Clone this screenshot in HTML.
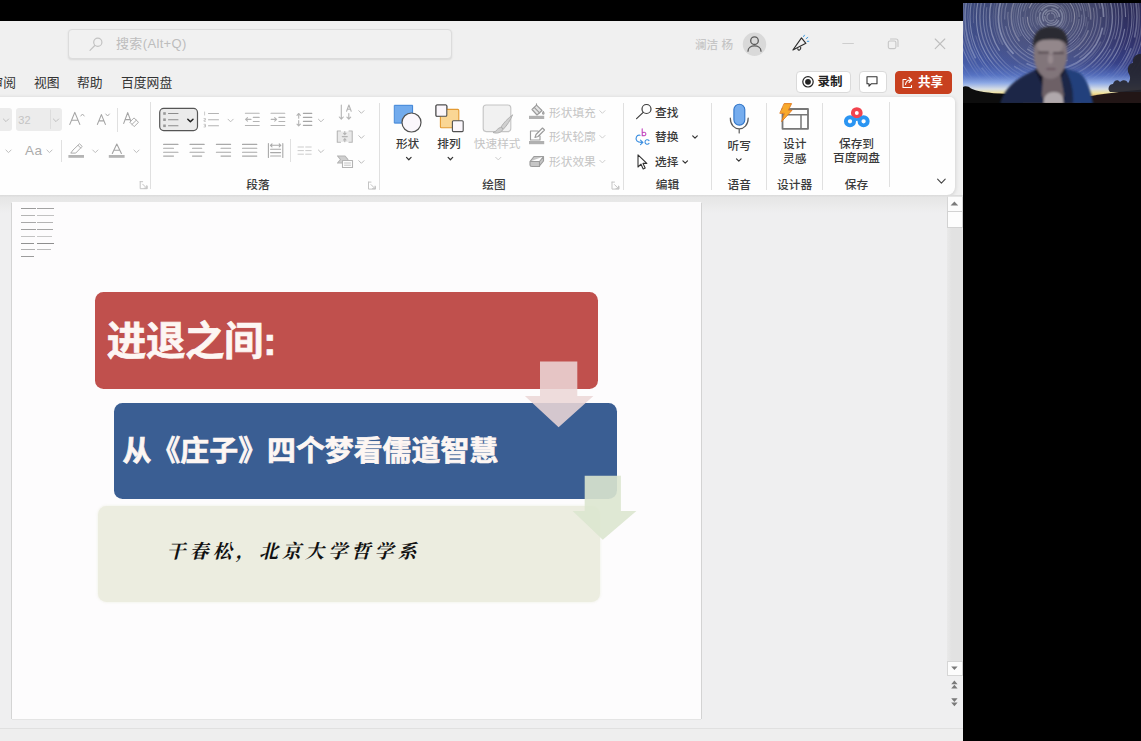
<!DOCTYPE html>
<html lang="zh-CN">
<head>
<meta charset="utf-8">
<title>PowerPoint</title>
<style>
*{box-sizing:border-box;margin:0;padding:0}
html,body{width:1141px;height:741px;overflow:hidden;background:#000}
body{position:relative;font-family:"Liberation Sans","Noto Sans CJK SC",sans-serif;font-size:12px;color:#333}
#win{position:absolute;left:0;top:21px;width:963px;height:720px;background:#f0f0f0;overflow:hidden}
#pg{position:absolute;left:0;top:-21px;width:963px;height:741px}
#pg>*{position:absolute}
#search{left:68px;top:29px;width:384px;height:30px;border:1px solid #dcdcdc;border-radius:4px;background:#f1f1f1;box-shadow:0 1px 2px rgba(0,0,0,.10)}
#search span{position:absolute;left:47px;top:6px;font-size:13px;letter-spacing:.35px;color:#bdbdbd;line-height:16px;white-space:nowrap}
.menu{font-size:12.8px;line-height:18px;color:#333;white-space:nowrap}
.tbtn{height:22px;border-radius:4px;font-size:13px;font-weight:bold;line-height:20px;white-space:nowrap;background:#fff;border:1px solid #dadada;color:#222}
#ribbon{left:-10px;top:96.7px;width:964.8px;height:98px;background:#fefefe;border-radius:0 5px 8px 0;box-shadow:0 1px 4px rgba(0,0,0,.17)}
.sep{width:1px;background:#e0e0e0}
.t{white-space:nowrap;font-size:11.7px;line-height:14px;color:#3a3a3a}
.t:not(.d){font-weight:500}
.d{color:#c4c4c4}
.c{transform:translateX(-50%);text-align:center}
svg{position:absolute;overflow:visible}
.fbox{background:#ececec;border-radius:3px}
#work{left:0;top:195px;width:963px;height:534px;background:linear-gradient(#dadada,#e6e6e6 2.5px,#e9e9e9 8px,#efeff0 18px)}
#status{left:0;top:728px;width:963px;height:13px;background:#eeeeee;border-top:1px solid #e0e0e0}
#slide{left:12px;top:203px;width:689px;height:516px;background:#fdfcfd;box-shadow:-1px 0 0 #d4d4d4,1px 0 0 #d3d3d3,0 1px 0 #e4e4e4}
#slide>*{position:absolute}
.box{border-radius:8.5px}
.sl{font-weight:bold;color:#fdf6f3;white-space:nowrap;-webkit-text-stroke:.7px #fdf6f3}
.au{white-space:nowrap;font-family:"Liberation Serif","Noto Serif CJK SC",serif;font-weight:700;font-size:19px;line-height:26px;letter-spacing:4.1px;color:#111;font-style:italic}
.ln{height:1px}
#video{position:absolute;left:963px;top:3px;width:178px;height:100px;overflow:hidden;background:#26314f}
</style>
</head>
<body>
<div id="win"><div id="pg">
<!-- TITLE BAR -->
<div id="search"><span>搜索(Alt+Q)</span></div>
<div class="t" style="left:695px;top:38px;font-size:11.6px;line-height:14px;color:#c6c6c6">澜洁 杨</div>
<!-- MENU -->
<div class="menu" style="left:-9.5px;top:74px">审阅</div>
<div class="menu" style="left:34px;top:74px">视图</div>
<div class="menu" style="left:77px;top:74px">帮助</div>
<div class="menu" style="left:121px;top:74px">百度网盘</div>
<div class="tbtn" style="left:795.5px;top:71px;width:55px;padding-left:21px;font-size:12.5px">录制</div>
<div class="tbtn" style="left:859px;top:71px;width:28px"></div>
<div class="tbtn" style="left:894.5px;top:70.5px;width:57px;height:23px;background:#c8401f;border-color:#c8401f;color:#fff;padding-left:22.5px;line-height:21px;font-size:12.6px">共享</div>
<!-- RIBBON -->
<div id="ribbon"></div>
<div class="fbox" style="left:-6px;top:108px;width:18px;height:22.5px"></div>
<div class="fbox" style="left:15.5px;top:108px;width:46px;height:22.5px"></div>
<div class="t d" style="left:18.3px;top:113.2px;font-size:11px">32</div>
<div class="t" style="left:25px;top:143.5px;font-size:13.5px;letter-spacing:.4px;color:#ababab">Aa</div>
<div class="sep" style="left:117px;top:108px;height:24px"></div>
<div class="sep" style="left:61px;top:140px;height:22px"></div>
<div class="sep" style="left:150px;top:102px;height:87px"></div>
<div class="sep" style="left:290px;top:139px;height:23px"></div>
<div class="sep" style="left:379px;top:103px;height:87px"></div>
<div class="sep" style="left:623px;top:103px;height:87px"></div>
<div class="sep" style="left:711px;top:103px;height:87px"></div>
<div class="sep" style="left:766px;top:103px;height:87px"></div>
<div class="sep" style="left:821.5px;top:103px;height:87px"></div>
<div class="sep" style="left:889px;top:102px;height:85px"></div>
<div class="t c" style="left:258px;top:178px">段落</div>
<div class="t c" style="left:494px;top:178px">绘图</div>
<div class="t c" style="left:667.5px;top:178px">编辑</div>
<div class="t c" style="left:739.2px;top:178px">语音</div>
<div class="t c" style="left:794.6px;top:178px">设计器</div>
<div class="t c" style="left:856.5px;top:177.5px">保存</div>
<div class="t c" style="left:407.6px;top:137.1px">形状</div>
<div class="t c" style="left:449px;top:137.1px">排列</div>
<div class="t c d" style="left:497.2px;top:137.1px">快速样式</div>
<div class="t d" style="left:549px;top:105.5px">形状填充</div>
<div class="t d" style="left:549px;top:130px">形状轮廓</div>
<div class="t d" style="left:549px;top:155px">形状效果</div>
<div class="t" style="left:655px;top:105.5px">查找</div>
<div class="t" style="left:655px;top:130px">替换</div>
<div class="t" style="left:655px;top:155px">选择</div>
<div class="t c" style="left:739.2px;top:138.6px">听写</div>
<div class="t c" style="left:794.7px;top:137.4px">设计</div>
<div class="t c" style="left:794.7px;top:152.2px">灵感</div>
<div class="t c" style="left:856.5px;top:137px">保存到</div>
<div class="t c" style="left:856.5px;top:151px">百度网盘</div>
<svg style="left:0;top:0" width="963" height="741" viewBox="0 0 963 741" fill="none" stroke-linecap="round" stroke-linejoin="round">
<defs>
  <path id="chv" d="M-2.6,-1.3 L0,1.3 L2.6,-1.3"/>
  <path id="chs" d="M-2.3,-1.15 L0,1.15 L2.3,-1.15"/>
  <g id="lnch"><path d="M-3.5,-3.5 H-1 M-3.5,-3.5 V3.5 H3.5 V1" stroke-width="1"/><path d="M-1,-1 L3,3 M3,0.5 V3 H0.5" stroke-width="1"/></g>
</defs>
<!-- title bar -->
<g stroke="#c2c2c2" stroke-width="1.2"><circle cx="97.8" cy="42.3" r="4.1"/><path d="M94.8,45.5 L90,50.3"/></g>
<circle cx="754.5" cy="44.2" r="11.7" fill="#d9d9d9"/>
<g stroke="#5a5a5a" stroke-width="1.3"><circle cx="754.5" cy="40.7" r="3.8"/><path d="M748,51.2 C748,44.2 761,44.2 761,51.2"/></g>
<g stroke="#2c2c2c" stroke-width="1.15"><path d="M792.9,50 L801.5,37.9 L805.9,43.3 Z"/><path d="M797.8,48.8 C798.2,51 801.2,50.4 800.7,47.4"/></g>
<g stroke="#3a9ae0" stroke-width="1"><path d="M803.6,36.6 L804.4,35.2 M806.2,38.6 L807.8,37.4 M807.3,41.3 H808.8"/></g>
<path d="M842.8,43.5 H853.4" stroke="#cecece" stroke-width="1.1"/>
<g stroke="#c6c6c6" stroke-width="1.1"><rect x="888.3" y="41" width="7.6" height="7.6" rx="1.6"/><path d="M890.5,39 H896 A2,2 0 0 1 898,41 V46.5"/></g>
<path d="M935.2,39 L944.8,48.6 M944.8,39 L935.2,48.6" stroke="#bdbdbd" stroke-width="1.1"/>
<!-- buttons -->
<circle cx="808" cy="81.8" r="5.2" stroke="#222" stroke-width="1.2"/><circle cx="808" cy="81.8" r="2.9" fill="#222"/>
<path d="M867,76.8 H877 V83.8 H871.2 L869,86.2 V83.8 H867 Z" stroke="#333" stroke-width="1.1"/>
<g stroke="#fff" stroke-width="1.1"><path d="M906,79.5 H903 V87.5 H911.5 V85.5"/><path d="M905.5,84.5 C906,81.5 908,80 910.5,80 M909,77.5 L911.8,80 L909,82.5"/></g>
<!-- font group -->
<g stroke="#bfbfbf" stroke-width="1"><use href="#chv" x="6" y="120.3"/><use href="#chv" x="56" y="120.3"/><use href="#chv" x="8.5" y="151.3"/><use href="#chv" x="49.5" y="151.3"/><use href="#chv" x="95.3" y="151.3"/><use href="#chv" x="136.5" y="151.3"/></g>
<path d="M50.5,110 V128.5" stroke="#dddddd" stroke-width="1"/>
<g stroke="#a4a4a4" stroke-width="1.1">
  <path d="M69.8,124.4 L74.8,112.4 L79.8,124.4 M71.6,120.3 H78"/><path d="M80.8,116 L82.5,114 L84.2,116" stroke-width="0.9"/>
  <path d="M97.4,124.4 L101.4,114.6 L105.4,124.4 M98.9,120.9 H103.9"/><path d="M105.8,114 L107.6,116 L109.4,114" stroke-width="0.9"/>
  <path d="M123.7,123.4 L127.7,112.6 L131.7,123.4 M125.2,119.6 H130.2"/>
  <path d="M134.3,118.2 L138.5,122.3 L134.2,126.6 L130,122.4 Z M132,124.4 L136.3,120.2" stroke-width="0.9" fill="#fefefe"/>
  <path d="M71,152.8 L73,150 L79.5,143.8 L82.2,146.4 L76,152.8 Z M78,145.3 L80.7,148" stroke-width="0.9"/>
  <path d="M112.3,153.4 L116.8,144 L121.4,153.4 M113.9,150.2 H119.8"/>
</g>
<rect x="68.4" y="155" width="15.6" height="2.8" fill="#b4b4b4"/>
<rect x="108.8" y="155" width="15.8" height="2.8" fill="#b4b4b4"/>
<g stroke="#c4c4c4"><use href="#lnch" x="143.7" y="185.2"/><use href="#lnch" x="372" y="185.6"/><use href="#lnch" x="615.5" y="185.6"/></g>
<!-- paragraph group -->
<rect x="159.7" y="108.4" width="37.8" height="22.2" rx="4" fill="#ebebeb" stroke="#555" stroke-width="1.2"/>
<g fill="#9a9a9a"><rect x="163.2" y="112.2" width="2.6" height="2.6"/><rect x="163.2" y="118.4" width="2.6" height="2.6"/><rect x="163.2" y="124.5" width="2.6" height="2.6"/></g>
<path d="M168.5,113.5 H178 M168.5,119.7 H178 M168.5,125.8 H178" stroke="#8c8c8c" stroke-width="1.1"/>
<use href="#chv" x="190.4" y="120.5" stroke="#222" stroke-width="1.5"/>
<g stroke="#b4b4b4" stroke-width="1.1">
  <path d="M208.5,113.5 H218.5 M208.5,119.7 H218.5 M208.5,125.8 H218.5"/>
  <path d="M204.6,112 V115 M204,118.5 H205.5 V120 H204 V121.3 H205.5 M204,124.3 H205.5 V127 H204 M204.5,125.7 H205.5" stroke-width="0.7"/>
  <path d="M245.4,113.3 H259.2 M253.3,117.4 H259.2 M253.3,121.5 H259.2 M245.4,125.5 H259.2 M251,119.4 H245.8 M247.5,117.6 L245.6,119.4 L247.5,121.2"/>
  <path d="M271,113.3 H284.8 M278.9,117.4 H284.8 M278.9,121.5 H284.8 M271,125.5 H284.8 M271.2,119.4 H276.4 M274.7,117.6 L276.6,119.4 L274.7,121.2"/>
  <path d="M303.4,113.3 H311.8 M303.4,117.3 H311.8 M303.4,121.3 H311.8 M303.4,125.3 H311.8" stroke="#a6a6a6" stroke-width="1.2"/><path d="M298.7,113.6 V118.2 M297,115.3 L298.7,113.5 L300.4,115.3 M298.7,120.6 V125.8 M297,124.1 L298.7,125.9 L300.4,124.1"/>
  <path d="M341.3,105 V119 M339.3,117 L341.3,119.2 L343.3,117 M348.8,113.5 V119 M346.9,117.2 L348.8,119.2 L350.7,117.2 M346.6,111.3 L348.9,105 L351.2,111.3 M347.4,109.3 H350.4"/>
  <rect x="337.8" y="131.5" width="14" height="10.4" fill="#e9e9e9" stroke="none"/><path d="M340.5,131 H337.3 V142.3 H340.5 M349,131 H352.2 V142.3 H349 M342.3,136.6 H347.3 M344.8,131.5 V134.5 M344.8,138.8 V141.8 M343.6,133.3 L344.8,134.6 L346,133.3 M343.6,140 L344.8,138.7 L346,140"/>
  <path d="M337.5,156 H345 L348,159.5 L345,163 H337.5 L340.5,159.5 Z" fill="#cfcfcf"/><rect x="342.5" y="160.5" width="10" height="7" fill="#fefefe"/><path d="M344.5,163 H350.5 M344.5,165.2 H350.5" stroke-width="0.8"/>
</g>
<g stroke="#bdbdbd" stroke-width="1"><use href="#chv" x="230.6" y="120.5"/><use href="#chv" x="321" y="120.5"/><use href="#chv" x="361.4" y="112"/><use href="#chv" x="361.4" y="137"/><use href="#chv" x="361.4" y="162"/><use href="#chv" x="321" y="151.3"/></g>
<g stroke="#a9a9a9" stroke-width="1.1">
  <path d="M163.6,144.4 H178 M163.6,148.3 H173.5 M163.6,152.2 H178 M163.6,156.1 H173.5"/>
  <path d="M190,144.4 H204.2 M192.5,148.3 H201.7 M190,152.2 H204.2 M192.5,156.1 H201.7"/>
  <path d="M216.4,144.4 H230.6 M221,148.3 H230.6 M216.4,152.2 H230.6 M221,156.1 H230.6"/>
  <path d="M242.5,144.4 H256.8 M242.5,148.3 H256.8 M242.5,152.2 H256.8 M242.5,156.1 H256.8"/>
  <path d="M268.4,143.5 V157.5 M282.8,143.5 V157.5 M270.5,145.3 H280.8 M272,143.8 L270.4,145.3 L272,146.8 M279.2,143.8 L280.8,145.3 L279.2,146.8 M270.6,149.2 H280.6 M270.6,152.6 H280.6 M270.6,156 H280.6"/>
</g>
<path d="M298,147 H303.5 M305.7,147 H311.2 M298,150.6 H303.5 M305.7,150.6 H311.2 M298,154.2 H303.5 M305.7,154.2 H311.2" stroke="#cccccc" stroke-width="1"/>
<!-- drawing group -->
<rect x="394.7" y="105.3" width="17.9" height="17.8" fill="#72abed" stroke="#3b82d6" stroke-width="1"/>
<circle cx="411.5" cy="122.5" r="9.5" fill="#fbf7fc" stroke="#505050" stroke-width="1.2"/>
<g stroke="#333" stroke-width="1.2"><use href="#chs" x="408.8" y="158.6"/><use href="#chs" x="450.4" y="158.6"/><use href="#chs" x="695" y="137"/><use href="#chs" x="685.2" y="162"/><use href="#chs" x="738.8" y="160"/></g>
<rect x="436" y="105" width="10.8" height="11.3" rx="1" fill="#fbf7fc" stroke="#505050" stroke-width="1.1"/>
<rect x="440.4" y="109.4" width="18.4" height="18.3" rx="1" fill="#fad694" stroke="#e39a33" stroke-width="1.1"/>
<rect x="436" y="105" width="10.8" height="11.3" rx="1" fill="#fbf7fc" stroke="#505050" stroke-width="1.1"/>
<rect x="452.4" y="120.8" width="10.8" height="10.8" rx="1" fill="#fbf7fc" stroke="#505050" stroke-width="1.1"/>
<rect x="483.2" y="105" width="27.6" height="26.6" rx="3" fill="#f1f1f1" stroke="#c4c4c4" stroke-width="1.1"/>
<path d="M512.4,115.2 C508,118 503.5,123 501,127 L503.5,129 C507,125.5 510.5,120 512.4,115.2 Z M500.5,127.5 C497,127.5 497.5,131.5 493,132.5 C497,134 502,132.5 503,129.3 Z" fill="#cfcfcf" stroke="#ababab" stroke-width="0.9"/>
<use href="#chv" x="498.3" y="158.6" stroke="#cccccc" stroke-width="1"/>
<g stroke="#9c9c9c" stroke-width="1.15">
  <path d="M532,109.5 L536.5,105.2 L542,110.5 L537,115 Z" fill="#e4e4e4"/><path d="M536.5,105.2 V103.8 M534.2,107.4 L539.6,112.8 M543.3,111.5 C544.3,113 544.3,114 543.3,114.2 C542.3,114 542.3,113 543.3,111.5"/>
  <path d="M530.5,131 H538 M530.5,131 V140 H540 V136 M535,137.5 L536,134.5 L542.5,128 L544.5,130 L538,136.5 Z"/>
  <path d="M530,161.5 L534,156.5 H543.5 L539.5,161.5 Z M530,161.5 V165 C530,166 531,166.5 532,166.5 H539 L543.5,161 V156.5 M539.5,161.5 V166.5" fill="#c6c6c6"/>
</g>
<rect x="529" y="115.8" width="15.2" height="3.2" fill="#b0b0b0"/>
<rect x="529" y="141" width="15.2" height="3.2" fill="#b0b0b0"/>
<g stroke="#d0d0d0" stroke-width="1"><use href="#chv" x="602.4" y="112"/><use href="#chv" x="602.4" y="136.8"/><use href="#chv" x="602.4" y="161.6"/></g>
<!-- editing -->
<g stroke="#3c3c3c" stroke-width="1.2"><circle cx="646.5" cy="109" r="4.5"/><path d="M643.2,112.4 L636.6,118.6"/></g>
<path d="M640,135.3 C636.6,134.6 634.9,138.4 636.9,140.9 C638.1,142.3 640,142.6 642.7,142.4 M640.5,140.2 L642.9,142.4 L640.5,144.6" stroke="#3a8ee0" stroke-width="1.15"/>
<path d="M642.2,128.8 V135.8 M642.2,133.3 C643,131.7 645.9,131.9 645.9,134 C645.9,136.1 643,136.3 642.2,134.7" stroke="#c246be" stroke-width="1.1"/>
<path d="M649,140.6 C648,139.2 645,139.5 645,142 C645,144.5 648,144.8 649,143.4" stroke="#3a8ee0" stroke-width="1.1"/>
<path d="M638,154.8 V167 L641,164.2 L643.2,169 L645.2,168 L643,163.4 H646.8 Z" stroke="#333" stroke-width="1.1" fill="#fff"/>
<!-- mic -->
<path d="M730.3,118 C730.3,132.5 748.2,132.5 748.2,118 M739.2,129 V133" stroke="#5a5a5a" stroke-width="1.2"/>
<rect x="733.9" y="104.2" width="10.9" height="20.9" rx="5.4" fill="#76adee" stroke="#2f74c8" stroke-width="1.1"/>
<!-- designer -->
<rect x="782.5" y="109" width="25.5" height="19.8" stroke="#777" stroke-width="1.8" fill="#fefefe"/>
<path d="M783,114.8 H807.5 M801,114.8 V128" stroke="#777" stroke-width="1.5"/>
<path d="M784.5,103.6 H791.6 L788.3,110.3 H792 L781.6,121.6 L784.4,113.3 H780.2 Z" fill="#f8a92c" stroke="#e0771a" stroke-width="0.9"/>
<!-- baidu -->
<g stroke-width="3.9"><circle cx="850" cy="121.3" r="4.1" stroke="#2b95f2"/><circle cx="863.6" cy="121.3" r="4.1" stroke="#2b95f2"/><circle cx="856.8" cy="113" r="3.9" stroke="#f2434e"/><path d="M852,117.6 C854,120.2 859.6,120.2 861.6,117.6" stroke="#2b95f2" stroke-width="2.8"/></g>
<path d="M937.6,179.2 L941.4,183.2 L945.2,179.2" stroke="#444" stroke-width="1.1"/>
</svg>
<div id="work"></div>
<div style="left:946.5px;top:196px;width:16.5px;height:480px;background:linear-gradient(90deg,#e9e9e9,#e2e2e2 30%,#e2e2e2)"></div>
<div style="left:946.5px;top:196px;width:16.5px;height:15.5px;background:#fcfcfc;border:1px solid #d6d6d6;border-top-color:#e6e6e6"></div>
<div style="left:946.5px;top:211px;width:16.5px;height:16.5px;background:#fdfdfd;border:1px solid #d2d2d2"></div>
<div style="left:946.5px;top:660.5px;width:16.5px;height:15px;background:#fcfcfc;border:1px solid #d6d6d6"></div>
<div style="left:946.5px;top:675.5px;width:16.5px;height:53px;background:#efeff0"></div>
<svg style="left:0;top:0" width="963" height="741" viewBox="0 0 963 741">
<g fill="#7a7a7a"><path d="M950.6,205.6 L954.4,201.6 L958.2,205.6 Z"/><path d="M951.2,666.4 L954.4,670 L957.6,666.4 Z"/>
<path d="M951.2,684.2 L954.4,680.4 L957.6,684.2 Z M951.2,688.6 L954.4,684.8 L957.6,688.6 Z"/>
<path d="M951.2,698.2 L954.4,702 L957.6,698.2 Z M951.2,702.4 L954.4,706.2 L957.6,702.4 Z"/></g>
</svg>
<div style="left:12px;top:202.3px;width:689px;height:1.2px;background:#fdfcfd"></div>
<div id="slide">
  <div class="ln" style="left:8.7px;top:5px;width:15.5px;background:#9c9c9c"></div><div class="ln" style="left:25.3px;top:5px;width:16.3px;background:#a4a4a4"></div><div class="ln" style="left:8.7px;top:12px;width:14.5px;background:#b4b4b4"></div><div class="ln" style="left:25.3px;top:12px;width:16.5px;background:#c2c2c2"></div><div class="ln" style="left:8.7px;top:19px;width:15.5px;background:#a8a8a8"></div><div class="ln" style="left:25.3px;top:19px;width:15.5px;background:#b4b4b4"></div><div class="ln" style="left:8.7px;top:26px;width:15.5px;background:#a0a0a0"></div><div class="ln" style="left:25.3px;top:26px;width:16px;background:#a6a6a6"></div><div class="ln" style="left:8.7px;top:33px;width:14px;background:#c2c2c2"></div><div class="ln" style="left:25.3px;top:33px;width:14.5px;background:#c8c8c8"></div><div class="ln" style="left:8.7px;top:40px;width:13.5px;background:#929292"></div><div class="ln" style="left:25.3px;top:40px;width:16.6px;background:#8e8e8e"></div><div class="ln" style="left:8.7px;top:46px;width:14px;background:#b0b0b0"></div><div class="ln" style="left:25.3px;top:46px;width:14px;background:#bcbcbc"></div><div class="ln" style="left:8.7px;top:53px;width:13.5px;background:#9c9c9c"></div>
  <div class="box" style="left:83px;top:89px;width:503px;height:96.5px;background:#c0504d"></div>
  <div class="box" style="left:101.6px;top:199.7px;width:503.6px;height:96.3px;background:#3a5e93"></div>
  <div class="box" style="left:85.5px;top:302.5px;width:502.5px;height:96.5px;background:#ecede0;box-shadow:0 0 3px rgba(236,237,224,.9)"></div>
  <svg style="left:0;top:0" width="689" height="516" viewBox="0 0 689 516">
    <polygon points="528,158.5 565.3,158.5 565.3,193 581.4,193 546.6,224.3 512.9,193 528,193" fill="#ebd7d7" fill-opacity=".87"/>
    <polygon points="572.7,272.8 608.9,272.8 608.9,308 624.4,308 590.8,336.7 560.6,308 572.7,308" fill="#dbe6cf" fill-opacity=".9"/>
  </svg>
  <div class="sl" style="left:94.8px;top:109.3px;font-size:39.5px;line-height:58px;letter-spacing:-0.4px">进退之间:</div>
  <div class="sl" style="left:110.6px;top:227.4px;font-size:28.9px;line-height:42px">从《庄子》四个梦看儒道智慧</div>
  <div class="au" style="left:154.5px;top:336px">干春松，北京大学哲学系</div>
</div>
<div id="status"></div>
</div></div>
<div id="video"><svg style="left:0;top:0" width="178" height="100" viewBox="0 0 178 100">
<defs>
<linearGradient id="sky" x1="0" y1="0" x2="0" y2="1">
<stop offset="0" stop-color="#2b2e50"/><stop offset=".4" stop-color="#353b72"/><stop offset=".6" stop-color="#3b4b94"/><stop offset=".72" stop-color="#5672c2"/><stop offset=".8" stop-color="#8eaae6"/><stop offset=".86" stop-color="#d6dde4"/><stop offset=".9" stop-color="#f0e2a0"/><stop offset=".94" stop-color="#d8a850"/><stop offset="1" stop-color="#5a3a18"/>
</linearGradient>
<radialGradient id="halo" cx="88" cy="16" r="80" gradientUnits="userSpaceOnUse">
<stop offset="0" stop-color="#6a6e88" stop-opacity=".6"/><stop offset=".55" stop-color="#62688a" stop-opacity=".4"/><stop offset="1" stop-color="#5a6290" stop-opacity="0"/>
</radialGradient>
<linearGradient id="lr" x1="0" y1="0" x2="1" y2="0">
<stop offset="0" stop-color="#5a7ac8" stop-opacity=".38"/><stop offset=".45" stop-color="#5a7ac8" stop-opacity=".08"/><stop offset=".7" stop-color="#2a2060" stop-opacity=".12"/><stop offset="1" stop-color="#2a2060" stop-opacity=".3"/>
</linearGradient>
<linearGradient id="fade" x1="0" y1="0" x2="0" y2="1"><stop offset="0" stop-color="#fff"/><stop offset=".55" stop-color="#fff"/><stop offset=".78" stop-color="#000"/></linearGradient>
<mask id="fm"><rect width="178" height="100" fill="url(#fade)"/></mask>
<linearGradient id="lrm" x1="0" y1="0" x2="0" y2="1"><stop offset="0" stop-color="#fff"/><stop offset=".6" stop-color="#fff"/><stop offset=".8" stop-color="#000"/></linearGradient>
<mask id="lm"><rect width="178" height="100" fill="url(#lrm)"/></mask>
<filter id="b1" x="-20%" y="-20%" width="140%" height="140%"><feGaussianBlur stdDeviation="0.6"/></filter>
<filter id="b2" x="-20%" y="-20%" width="140%" height="140%"><feGaussianBlur stdDeviation="1.0"/></filter>
<clipPath id="vc"><rect x="0" y="0" width="178" height="100"/></clipPath>
</defs>
<g clip-path="url(#vc)">
<rect width="178" height="100" fill="url(#sky)"/>
<rect width="178" height="100" fill="url(#lr)" mask="url(#lm)"/>
<rect width="178" height="100" fill="url(#halo)" mask="url(#lm)"/>
<g fill="none" filter="url(#b1)" mask="url(#fm)">
<circle cx="88" cy="14" r="4.0" stroke="#dde2f2" stroke-opacity="0.28" stroke-width="1.26" stroke-dasharray="14.4 1.2" stroke-dashoffset="12.8"/>
<circle cx="88" cy="14" r="6.3" stroke="#cacbd8" stroke-opacity="0.37" stroke-width="1.18" stroke-dasharray="18.4 1.2" stroke-dashoffset="17.7"/>
<circle cx="88" cy="14" r="8.4" stroke="#dde2f2" stroke-opacity="0.37" stroke-width="1.39" stroke-dasharray="14.0 4.2" stroke-dashoffset="51.2"/>
<circle cx="88" cy="14" r="11.5" stroke="#dde2f2" stroke-opacity="0.32" stroke-width="1.53" stroke-dasharray="19.6 1.6" stroke-dashoffset="63.5"/>
<circle cx="88" cy="14" r="13.5" stroke="#c4c6d8" stroke-opacity="0.28" stroke-width="1.14" stroke-dasharray="46.3 4.4" stroke-dashoffset="54.5"/>
<circle cx="88" cy="14" r="15.5" stroke="#d4d8ea" stroke-opacity="0.18" stroke-width="1.35" stroke-dasharray="38.3 5.2" stroke-dashoffset="91.0"/>
<circle cx="88" cy="14" r="18.7" stroke="#c4c6d8" stroke-opacity="0.24" stroke-width="0.93" stroke-dasharray="41.2 2.8" stroke-dashoffset="89.9"/>
<circle cx="88" cy="14" r="20.8" stroke="#d4d8ea" stroke-opacity="0.24" stroke-width="0.77" stroke-dasharray="33.5 8.0" stroke-dashoffset="28.0"/>
<circle cx="88" cy="14" r="23.6" stroke="#e2dfe4" stroke-opacity="0.41" stroke-width="1.1" stroke-dasharray="40.9 8.6" stroke-dashoffset="115.4"/>
<circle cx="88" cy="14" r="26.1" stroke="#d4d8ea" stroke-opacity="0.24" stroke-width="0.72" stroke-dasharray="64.6 12.4" stroke-dashoffset="22.1"/>
<circle cx="88" cy="14" r="28.2" stroke="#cacbd8" stroke-opacity="0.28" stroke-width="1.19" stroke-dasharray="86.5 5.5" stroke-dashoffset="90.0"/>
<circle cx="88" cy="14" r="30.8" stroke="#dde2f2" stroke-opacity="0.26" stroke-width="1.09" stroke-dasharray="115.5 3.9" stroke-dashoffset="167.4"/>
<circle cx="88" cy="14" r="33.3" stroke="#d4d8ea" stroke-opacity="0.39" stroke-width="0.91" stroke-dasharray="81.2 14.9" stroke-dashoffset="134.4"/>
<circle cx="88" cy="14" r="35.4" stroke="#c4c6d8" stroke-opacity="0.2" stroke-width="1.14" stroke-dasharray="56.3 12.6" stroke-dashoffset="184.6"/>
<circle cx="88" cy="14" r="37.5" stroke="#c4c6d8" stroke-opacity="0.18" stroke-width="1.28" stroke-dasharray="78.9 13.2" stroke-dashoffset="87.6"/>
<circle cx="88" cy="14" r="39.7" stroke="#e2dfe4" stroke-opacity="0.31" stroke-width="1.53" stroke-dasharray="74.2 10.8" stroke-dashoffset="156.5"/>
<circle cx="88" cy="14" r="43.2" stroke="#cacbd8" stroke-opacity="0.37" stroke-width="0.95" stroke-dasharray="85.8 17.5" stroke-dashoffset="255.0"/>
<circle cx="88" cy="14" r="46.3" stroke="#dde2f2" stroke-opacity="0.26" stroke-width="1.18" stroke-dasharray="80.6 6.6" stroke-dashoffset="31.7"/>
<circle cx="88" cy="14" r="49.8" stroke="#e2dfe4" stroke-opacity="0.22" stroke-width="1.4" stroke-dasharray="106.4 21.7" stroke-dashoffset="186.6"/>
<circle cx="88" cy="14" r="52.6" stroke="#dde2f2" stroke-opacity="0.4" stroke-width="1.68" stroke-dasharray="97.3 16.1" stroke-dashoffset="216.1"/>
<circle cx="88" cy="14" r="55.6" stroke="#c4c6d8" stroke-opacity="0.23" stroke-width="1.62" stroke-dasharray="112.3 7.3" stroke-dashoffset="94.1"/>
<circle cx="88" cy="14" r="58.0" stroke="#cacbd8" stroke-opacity="0.17" stroke-width="0.98" stroke-dasharray="158.9 28.6" stroke-dashoffset="33.6"/>
<circle cx="88" cy="14" r="61.4" stroke="#d4d8ea" stroke-opacity="0.41" stroke-width="1.36" stroke-dasharray="189.9 21.3" stroke-dashoffset="54.2"/>
<circle cx="88" cy="14" r="64.9" stroke="#d4d8ea" stroke-opacity="0.28" stroke-width="1.06" stroke-dasharray="146.5 9.0" stroke-dashoffset="244.1"/>
<circle cx="88" cy="14" r="67.7" stroke="#d4d8ea" stroke-opacity="0.35" stroke-width="1.02" stroke-dasharray="255.1 10.4" stroke-dashoffset="232.2"/>
<circle cx="88" cy="14" r="71.1" stroke="#c4c6d8" stroke-opacity="0.35" stroke-width="1.4" stroke-dasharray="235.8 33.5" stroke-dashoffset="157.2"/>
<circle cx="88" cy="14" r="74.6" stroke="#dde2f2" stroke-opacity="0.39" stroke-width="1.12" stroke-dasharray="246.8 33.6" stroke-dashoffset="268.4"/>
<circle cx="88" cy="14" r="77.6" stroke="#e2dfe4" stroke-opacity="0.26" stroke-width="0.71" stroke-dasharray="134.3 12.4" stroke-dashoffset="56.4"/>
<circle cx="88" cy="14" r="81.0" stroke="#dde2f2" stroke-opacity="0.35" stroke-width="1.09" stroke-dasharray="258.3 27.9" stroke-dashoffset="224.3"/>
<circle cx="88" cy="14" r="83.2" stroke="#d4d8ea" stroke-opacity="0.36" stroke-width="0.73" stroke-dasharray="240.6 25.5" stroke-dashoffset="120.3"/>
<circle cx="88" cy="14" r="86.0" stroke="#dde2f2" stroke-opacity="0.32" stroke-width="1.62" stroke-dasharray="183.4 11.2" stroke-dashoffset="162.6"/>
<circle cx="88" cy="14" r="88.3" stroke="#e2dfe4" stroke-opacity="0.2" stroke-width="1.61" stroke-dasharray="266.8 25.8" stroke-dashoffset="494.7"/>
<circle cx="88" cy="14" r="90.9" stroke="#cacbd8" stroke-opacity="0.23" stroke-width="1.33" stroke-dasharray="303.6 37.3" stroke-dashoffset="114.4"/>
<circle cx="88" cy="14" r="93.6" stroke="#d4d8ea" stroke-opacity="0.31" stroke-width="1.02" stroke-dasharray="175.0 29.3" stroke-dashoffset="492.0"/>
<circle cx="88" cy="14" r="96.7" stroke="#cacbd8" stroke-opacity="0.41" stroke-width="0.98" stroke-dasharray="187.8 28.6" stroke-dashoffset="167.2"/>
<circle cx="88" cy="14" r="100.0" stroke="#dde2f2" stroke-opacity="0.26" stroke-width="1.22" stroke-dasharray="304.9 39.6" stroke-dashoffset="529.1"/>
<circle cx="88" cy="14" r="102.7" stroke="#dde2f2" stroke-opacity="0.18" stroke-width="0.73" stroke-dasharray="358.6 14.5" stroke-dashoffset="457.5"/>
<circle cx="88" cy="14" r="105.3" stroke="#e2dfe4" stroke-opacity="0.33" stroke-width="1.26" stroke-dasharray="313.9 29.3" stroke-dashoffset="125.7"/>
<circle cx="88" cy="14" r="107.7" stroke="#e2dfe4" stroke-opacity="0.2" stroke-width="0.75" stroke-dasharray="318.2 31.7" stroke-dashoffset="426.3"/>
<circle cx="88" cy="14" r="111.2" stroke="#c4c6d8" stroke-opacity="0.34" stroke-width="0.9" stroke-dasharray="290.9 21.5" stroke-dashoffset="7.5"/>
<circle cx="88" cy="14" r="114.1" stroke="#dde2f2" stroke-opacity="0.17" stroke-width="0.93" stroke-dasharray="374.5 37.5" stroke-dashoffset="678.7"/>
<circle cx="88" cy="14" r="117.1" stroke="#c4c6d8" stroke-opacity="0.36" stroke-width="1.09" stroke-dasharray="387.7 54.7" stroke-dashoffset="64.1"/>
<circle cx="88" cy="14" r="119.3" stroke="#dde2f2" stroke-opacity="0.28" stroke-width="1.33" stroke-dasharray="426.0 31.9" stroke-dashoffset="426.3"/>
<circle cx="88" cy="14" r="122.5" stroke="#d4d8ea" stroke-opacity="0.41" stroke-width="1.16" stroke-dasharray="368.0 24.9" stroke-dashoffset="555.9"/>
<circle cx="88" cy="14" r="124.9" stroke="#e2dfe4" stroke-opacity="0.39" stroke-width="1.68" stroke-dasharray="464.6 41.0" stroke-dashoffset="620.5"/>
<circle cx="88" cy="14" r="127.3" stroke="#c4c6d8" stroke-opacity="0.35" stroke-width="0.72" stroke-dasharray="341.3 17.8" stroke-dashoffset="273.6"/>
<circle cx="88" cy="14" r="130.5" stroke="#cacbd8" stroke-opacity="0.29" stroke-width="0.73" stroke-dasharray="437.3 19.6" stroke-dashoffset="656.0"/>
<circle cx="88" cy="14" r="133.4" stroke="#dde2f2" stroke-opacity="0.34" stroke-width="1.62" stroke-dasharray="347.6 67.0" stroke-dashoffset="754.8"/>
<circle cx="88" cy="14" r="136.7" stroke="#cacbd8" stroke-opacity="0.34" stroke-width="1.65" stroke-dasharray="362.9 66.1" stroke-dashoffset="73.9"/>
<circle cx="88" cy="14" r="139.4" stroke="#dde2f2" stroke-opacity="0.31" stroke-width="1.53" stroke-dasharray="391.2 26.2" stroke-dashoffset="450.5"/>
</g>
<!-- ground + trees -->
<g filter="url(#b1)">
<path d="M-2,101 V85 C2,82.5 5,83 8,85.5 C14,88.5 24,90 44,91 H60 V101 Z" fill="#0d0c10"/>
<path d="M118,101 V95 C130,92.5 150,89 180,86.5 V101 Z" fill="#231616"/>
<path d="M147,89 C144,86 146,81 150,81 C151,77 155,76 157,79 C160,76 164,77 165,80 C167,78 168,74 166,71 C163,66 166,60 170,60 C169,54 174,50 180,51 V89 Z" fill="#23232e" fill-opacity=".92"/>
</g>
<!-- person -->
<g filter="url(#b2)">
<path d="M37,101 C40,88 50,78 64,71 L76,65 H100 L114,69 C122,72 127,84 130,101 Z" fill="#1a2547"/>
<path d="M102,66 L114,69 C122,72 127,84 130,101 H110 C111,88 108,76 102,66 Z" fill="#23417b"/>
<path d="M72,67 C78,80 83,90 88,97 C93,88 98,76 102,66 L96,62 H78 Z" fill="#121728"/>
<path d="M80,70 H97 L101,92 L98,101 H82 L79,92 Z" fill="#6d6166"/>
<path d="M80.5,101 C80.5,93 84,89 91,89 C98,89 100.5,93 100.5,101 Z" fill="#b0a8ac"/>
<ellipse cx="87.4" cy="51" rx="16.8" ry="25" fill="#81757a"/>
<ellipse cx="87" cy="43" rx="13" ry="8" fill="#93878b"/>
<path d="M70.4,46 C68.5,30 77,23.6 88,23.6 C99,23.6 106.5,30 104.6,46 C103.5,38.5 99,36 88,36.5 C78,36 72,38.5 70.4,46 Z" fill="#2a2930"/>
<path d="M75,49.5 H86 M90,50 H101" stroke="#54494f" stroke-width="2"/>
<path d="M83.5,66 H92.5" stroke="#66505a" stroke-width="1.6"/>
<path d="M85.5,52 C84.5,57 84.5,60 87.5,61 C90.5,60 90.5,57 89.5,52" fill="#978a8e"/>
</g>
</g>
</g>
</svg></div>
</body>
</html>
